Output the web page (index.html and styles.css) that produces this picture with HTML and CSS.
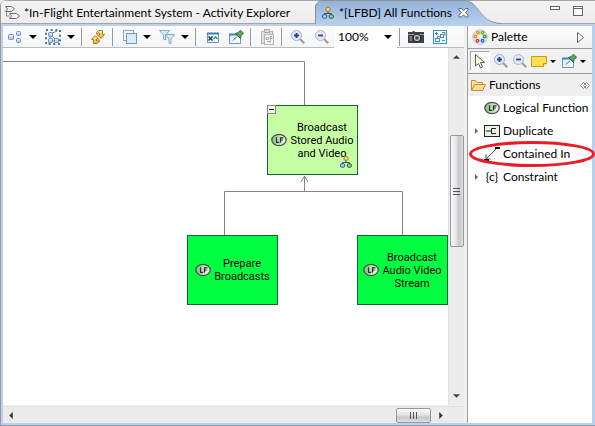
FILE: index.html
```html
<!DOCTYPE html>
<html lang="en">
<head>
<meta charset="utf-8">
<title>[LFBD] All Functions</title>
<link rel="stylesheet" href="styles.css">
</head>
<body>
<svg class="defs" aria-hidden="true">
  <defs>
    <linearGradient id="steel" x1="0" y1="0" x2="0" y2="1"><stop offset="0" stop-color="#eef4fc"/><stop offset="1" stop-color="#a9c3e4"/></linearGradient>
    <linearGradient id="gold" x1="0" y1="0" x2="0" y2="1"><stop offset="0" stop-color="#fff0a8"/><stop offset="1" stop-color="#eab030"/></linearGradient>
    <linearGradient id="tabfill" x1="0" y1="0" x2="0" y2="1"><stop offset="0" stop-color="#94b2d6"/><stop offset="1" stop-color="#b9d1ee"/></linearGradient>
    <linearGradient id="lfgrad" x1="0" y1="0" x2="1" y2="0"><stop offset="0" stop-color="#86bd7c"/><stop offset="1" stop-color="#f4faf0"/></linearGradient>
    <linearGradient id="pinbox" x1="0" y1="0" x2="1" y2="1"><stop offset="0" stop-color="#d4eafa"/><stop offset="1" stop-color="#ffffff"/></linearGradient>
    <symbol id="lf" viewBox="0 0 16 14"><ellipse cx="8" cy="7" rx="7.2" ry="5.6" fill="url(#lfgrad)" stroke="#4b524b" stroke-width="1.3"/><path d="M5.5 4.3v5h2.7M9.5 9.6V4.8h3M9.5 7h2.4" fill="none" stroke="#2c302c" stroke-width="1.2"/></symbol>
    <symbol id="tree" viewBox="0 0 12 12"><path d="M6 4v2.5M2.5 8V6.5h7V8" fill="none" stroke="#3c4a70" stroke-width="1"/><rect x="4.1" y=".6" width="3.8" height="3.6" rx=".8" fill="#ffe08a" stroke="#ad7618"/><rect x=".6" y="7.8" width="4" height="3.4" rx=".8" fill="#a9cdf8" stroke="#2d58a3"/><rect x="7.3" y="7.8" width="4" height="3.4" rx=".8" fill="#8fd08a" stroke="#31603f"/></symbol>
    <symbol id="zoomin" viewBox="0 0 16 16"><path d="M9.8 9.8l4.4 4.4" stroke="#b29c80" stroke-width="2.2"/><circle cx="6.5" cy="6.5" r="5" fill="#dfe9f8" stroke="#9fb0cd"/><path d="M6.500 4v5M4 6.500h5" stroke="#23409a" stroke-width="1.800"/></symbol>
    <symbol id="zoomout" viewBox="0 0 16 16"><path d="M9.8 9.8l4.4 4.4" stroke="#b29c80" stroke-width="2.2"/><circle cx="6.5" cy="6.5" r="5" fill="#e3eaf6" stroke="#a9b5c9"/><path d="M4 6.500h5" stroke="#344785" stroke-width="1.800"/></symbol>
    <symbol id="pin" viewBox="0 0 16 16"><rect x="1.5" y="5.5" width="11" height="9" fill="url(#pinbox)" stroke="#6b9bc0"/><path d="M1 5.500h8" stroke="#4384b4" stroke-width="2"/><path d="M5 11.500l4-4" stroke="#555"/><path d="M7.500 4.500l5 5 .5-2.800 2.500-2.500-3-3-2.500 2.500z" fill="#58a562" stroke="#2b6c3c"/></symbol>
    <symbol id="down" viewBox="0 0 8 4"><path d="M0 0h8L4 4z"/></symbol>
  </defs>
</svg>

<div class="window">
  <header class="tabs" role="tablist">
    <button class="tab tab-first" role="tab">
      <svg class="i16" viewBox="0 0 16 16"><path d="M1.500 1.500h6l3 2.500-3 2.500h-6l2-2.500zM5.500 8.500h7l3 2.500-3 2.500h-7l2-2.500z" fill="#f4f4f4" stroke="#6d6d6d"/><path d="M2.500 7.500V11h3" fill="none" stroke="#888"/></svg>
      <span>*In-Flight Entertainment System - Activity Explorer</span>
    </button>
    <div class="tab active">
      <svg class="tab-shape" viewBox="0 0 186 26" preserveAspectRatio="none"><path d="M0 26V6Q0 4 5 .5H148C166 .5 162 22.500 184 23.500V26z" fill="url(#tabfill)"/><path d="M.5 24V6Q1 4 5 .5H148C166 .5 162 22.500 186 23.500" fill="none" stroke="#8b929b"/></svg>
      <button class="tab-name" role="tab" aria-selected="true"><svg class="i12" viewBox="0 0 12 12"><use href="#tree"/></svg><span>*[LFBD] All Functions</span></button>
      <button class="close" aria-label="Close"><svg viewBox="0 0 11 11"><path d="M1 1.500h2.500l2 2.300 2-2.300H10v1.700L7.500 5.500 10 8v2H7.500l-2-2.300L3.500 10H1V8l2.500-2.500L1 3.200z" fill="#fff" stroke="#5e6670"/></svg></button>
    </div>
    <div class="winbtns">
      <button aria-label="Minimize"><svg viewBox="0 0 10 10"><rect x=".5" y=".5" width="9" height="3" fill="#fff" stroke="#666"/></svg></button>
      <button aria-label="Maximize"><svg viewBox="0 0 10 10"><rect x=".5" y=".5" width="9" height="9" fill="#fff" stroke="#666"/><path d="M0 2.500h10" stroke="#666"/></svg></button>
    </div>
  </header>

  <div class="body">
    <main class="editor">
      <div class="toolbar" role="toolbar">
        <button class="tool" aria-label="Arrange"><svg viewBox="0 0 16 16"><g fill="url(#steel)" stroke="#6b8fc0"><rect x="1.500" y="5.500" width="5" height="5" rx="1"/><rect x="9.500" y="2.500" width="4" height="4" rx="1"/><rect x="9.500" y="9.500" width="4" height="4" rx="1"/></g></svg></button>
        <button class="drop" aria-label="Arrange menu"><svg viewBox="0 0 8 4"><use href="#down"/></svg></button>
        <button class="tool" aria-label="Select"><svg viewBox="0 0 16 16"><rect x="1" y="1" width="14" height="14" fill="none" stroke="#4b74a6" stroke-width="2" stroke-dasharray="2 2.670"/><path d="M5 5v7h7M5 5l7 7M5 5l7-3" fill="none" stroke="#6780a4"/><g fill="url(#steel)" stroke="#5f83b3"><rect x="3.500" y="3.500" width="4" height="4" rx="1"/><rect x="3.500" y="9.500" width="4" height="4" rx="1"/><rect x="9.500" y="9.500" width="4" height="4" rx="1"/></g></svg></button>
        <button class="drop" aria-label="Select menu"><svg viewBox="0 0 8 4"><use href="#down"/></svg></button>
        <span class="sep"></span>
        <button class="tool" aria-label="Refresh"><svg viewBox="0 0 16 16"><g fill="url(#gold)" stroke="#b97a13"><path d="M6.500 3.500L9 1.500h3.500v4h2L11 9.500 7.500 6h2V4H8L7 5.500z"/><path d="M9.500 12.500L7 14.500H3.500v-4h-2L5 6.500 8.500 10h-2v2H8l1-1.500z"/></g></svg></button>
        <span class="sep"></span>
        <button class="tool" aria-label="Layers"><svg viewBox="0 0 16 16"><rect x="2.500" y="1.500" width="10" height="10" fill="#f7fbfc" stroke="#84abc4"/><rect x="5.500" y="4.500" width="10" height="10" fill="#dcebf8" stroke="#6c9bbb"/></svg></button>
        <button class="drop" aria-label="Layers menu"><svg viewBox="0 0 8 4"><use href="#down"/></svg></button>
        <button class="tool" aria-label="Filters"><svg viewBox="0 0 16 16"><g fill="#d4eaf6" stroke="#82aeca"><path d="M.5 1.500h10l-4 4.500v5l-2-1V6z"/><path d="M6.500 5.500h9L12 10v5l-2-1v-4z"/></g></svg></button>
        <button class="drop" aria-label="Filters menu"><svg viewBox="0 0 8 4"><use href="#down"/></svg></button>
        <span class="sep"></span>
        <button class="tool" aria-label="Hide element"><svg viewBox="0 0 16 16"><rect x="3.500" y="4.500" width="11" height="9" fill="#eef8fc" stroke="#7396b8"/><path d="M3 4.500h12" stroke="#3182b8" stroke-width="2"/><path d="M4.500 7.500l4 4m0-4l-4 4" stroke="#173f68" stroke-width="1.500"/><path d="M9.500 10l2-2 2 2" fill="none" stroke="#3f9b60" stroke-width="1.500"/></svg></button>
        <button class="tool" aria-label="Pin element"><svg viewBox="0 0 16 16"><use href="#pin"/></svg></button>
        <span class="sep"></span>
        <button class="tool" aria-label="Paste layout" disabled><svg viewBox="0 0 16 16"><rect x="2.500" y="2.500" width="11" height="12" fill="#e0e0e0" stroke="#b5b5b5"/><rect x="5.500" y=".5" width="5" height="3" fill="#ddd" stroke="#aaa"/><rect x="5.500" y="5.500" width="9" height="10" fill="#f6f6f6" stroke="#b5b5b5"/><path d="M7 8.500h2.500v2H7zM11 7.500h2v2h-2zM8 12.500h3v1.500M11.500 10v2.500" fill="none" stroke="#aaa"/></svg></button>
        <span class="sep"></span>
        <button class="tool" aria-label="Zoom in"><svg viewBox="0 0 16 16"><use href="#zoomin"/></svg></button>
        <button class="tool" aria-label="Zoom out"><svg viewBox="0 0 16 16"><use href="#zoomout"/></svg></button>
        <div class="combo"><select aria-label="Zoom level"><option>100%</option></select><svg class="combo-arrow" viewBox="0 0 8 4"><use href="#down"/></svg></div>
        <span class="sep sep-tight"></span>
        <button class="tool" aria-label="Export image"><svg viewBox="0 0 16 16"><path d="M1 3h3.500V2h2v1H16v11H0V3z" fill="#414141"/><path d="M0 5.500h16" stroke="#999"/><circle cx="9" cy="9" r="3.800" fill="#b9bfc6" stroke="#1d1d1d"/><circle cx="9" cy="9" r="1.800" fill="#36506a"/><rect x="1.500" y="7" width="2.500" height="5" fill="#777"/></svg></button>
        <button class="tool" aria-label="Layout mode"><svg viewBox="0 0 16 16"><g fill="#f1fafd" stroke="#3e91b0"><rect x="1.500" y="1.500" width="13" height="13"/><rect x="3.500" y="9.500" width="4" height="3"/><rect x="8.500" y="5.500" width="3" height="3"/><path d="M3 4.500h3M4.500 3v3M10 3.500h3v3M5.500 9V7.500h3M10 11.500h3"/></g></svg></button>
      </div>

      <div class="viewport">
        <div class="canvas">
          <svg class="links" width="445" height="356"><path d="M0 13.500h301.500V57M221.500 187v-43.500h178V187M301.500 143V128M298 134l3.500-6 3.500 6" fill="none" stroke="#858585"/></svg>
          <div class="node stored"><svg class="lf" viewBox="0 0 16 14"><use href="#lf"/></svg><span>Broadcast<br>Stored Audio<br>and Video</span>
            <button class="collapse" aria-label="Collapse"><svg viewBox="0 0 7 7"><path d="M1 3.500h5" stroke="#222"/></svg></button>
            <svg class="badge" viewBox="0 0 12 12"><use href="#tree"/></svg></div>
          <div class="node prepare"><svg class="lf" viewBox="0 0 16 14"><use href="#lf"/></svg><span>Prepare<br>Broadcasts</span></div>
          <div class="node stream"><svg class="lf" viewBox="0 0 16 14"><use href="#lf"/></svg><span>Broadcast<br>Audio Video<br>Stream</span></div>
        </div>
        <div class="vbar">
          <svg class="arr" viewBox="0 0 8 4"><path d="M0 4h8L4 0z" fill="#444"/></svg>
          <span class="vbefore"></span>
          <span class="vthumb"><i></i><i></i><i></i></span>
          <span class="vafter"></span>
          <svg class="arr" viewBox="0 0 8 4"><path d="M0 0h8L4 4z" fill="#444"/></svg>
        </div>
      </div>
      <div class="hbar">
        <svg class="arr-h" viewBox="0 0 4 8"><path d="M4 0v8L0 4z" fill="#333"/></svg>
        <span class="hbefore"></span>
        <span class="hthumb"><i></i><i></i><i></i></span>
        <svg class="arr-h" viewBox="0 0 4 8"><path d="M0 0v8l4-4z" fill="#333"/></svg>
      </div>
    </main>

    <aside class="palette">
      <div class="pal-head">
        <svg class="i16" viewBox="0 0 16 16"><circle cx="8" cy="8" r="7.300" fill="#e4eefb" stroke="#b2cbed"/><g fill="#fff" stroke-width="1.500"><circle cx="6" cy="3.700" r="1.300" stroke="#e29a1c"/><circle cx="10.500" cy="3.700" r="1.300" stroke="#7db51a"/><circle cx="12.700" cy="7.500" r="1.300" stroke="#34a136"/><circle cx="3.300" cy="7.500" r="1.300" stroke="#e88620"/><circle cx="5.500" cy="11.800" r="1.300" stroke="#e03c28"/><circle cx="10.500" cy="11.800" r="1.300" stroke="#3667cf"/></g></svg>
        <h2>Palette</h2>
        <button class="pal-toggle" aria-label="Hide palette"><svg viewBox="0 0 7 11"><path d="M.5.500v10l6-5z" fill="#fff" stroke="#666"/></svg></button>
      </div>
      <div class="pal-tools" role="toolbar">
        <button class="pick" aria-label="Select"><svg viewBox="0 0 16 16"><path d="M3.500 1.500v11.500l3-2.500 2 4.500 2-1-2-4.500h4z" fill="#fffbe8" stroke="#5f5b50"/></svg></button>
        <button class="ptool" aria-label="Zoom in"><svg viewBox="0 0 16 16"><use href="#zoomin"/></svg></button>
        <button class="ptool" aria-label="Zoom out"><svg viewBox="0 0 16 16"><use href="#zoomout"/></svg></button>
        <button class="ptool" aria-label="Note"><svg viewBox="0 0 16 16"><path d="M.5 3.500h15v7l-3 3H.5z" fill="#ffdf54" stroke="#c79a1c"/><path d="M15.500 10.500h-3v3" fill="#fff4b8" stroke="#c79a1c"/></svg></button>
        <button class="pdrop" aria-label="Note menu"><svg viewBox="0 0 8 4"><use href="#down"/></svg></button>
        <button class="ptool" aria-label="Pin"><svg viewBox="0 0 16 16"><use href="#pin"/></svg></button>
        <button class="pdrop" aria-label="Pin menu"><svg viewBox="0 0 8 4"><use href="#down"/></svg></button>
      </div>
      <button class="drawer">
        <svg class="i16" viewBox="0 0 16 16"><path d="M1.500 13V3.500h4l1.500 2h5.500V8" fill="#fbe3a5" stroke="#c48b35"/><path d="M1.500 13.500l3-6h11l-3 6z" fill="#ffdc8c" stroke="#c48b35"/></svg>
        <span>Functions</span>
        <svg class="pushpin" viewBox="0 0 10 7"><path d="M3.500 .5l-3 3 3 3 1.500-1.500 1.500 1.500 3-3-3-3L5 2zM5 2L3.500 3.500 5 5l1.500-1.500z" fill="#fff" stroke="#888"/></svg>
      </button>
      <ul class="entries">
        <li><button><span class="exp"></span><svg class="i16" viewBox="0 0 16 14"><use href="#lf"/></svg><span>Logical Function</span></button></li>
        <li><button><span class="exp"><svg viewBox="0 0 4 6"><path d="M0 0v6l3-3z" fill="#666"/></svg></span><svg class="i16" viewBox="0 0 16 16"><rect x=".5" y="2.500" width="15" height="11" fill="#e3f4df" stroke="#222"/><path d="M2 8h5M12 5.500H7.500v5H12" fill="none" stroke="#222"/></svg><span>Duplicate</span></button></li>
        <li class="marked"><button><span class="exp"></span><svg class="i16" viewBox="0 0 16 16"><path d="M2 13L12.500 2.500M2 8.500V13h4.500" fill="none" stroke="#555"/><path d="M11 2h5M0 14h5" stroke="#111" stroke-width="2"/></svg><span>Contained In</span></button>
          <svg class="ring" viewBox="0 0 126 26"><ellipse cx="63" cy="13" rx="61.500" ry="11.500" fill="none" stroke="#ec1c24" stroke-width="3"/></svg></li>
        <li><button><span class="exp"><svg viewBox="0 0 4 6"><path d="M0 0v6l3-3z" fill="#666"/></svg></span><span class="glyph">{c}</span><span>Constraint</span></button></li>
      </ul>
    </aside>
  </div>
</div>
</body>
</html>
```

FILE: styles.css
```css
* { box-sizing: border-box; }
body { margin: 0; font: 12px/16px Lato, "Open Sans", sans-serif; color: #000; background: #f0f0f0; }
button { padding: 0; border: 0; background: none; font: inherit; color: inherit; text-align: left; }
svg { display: block; flex: none; }
.defs { position: absolute; width: 0; height: 0; }
.i16 { width: 16px; height: 16px; }
.i12 { width: 12px; height: 12px; }

.window { display: flex; flex-direction: column; height: 100vh; border-left: 1px solid #999; border-bottom: 1px solid #8f9aa8; border-top-left-radius: 6px; overflow: hidden; }

.tabs { display: flex; flex: none; height: 26px; border-top: 1px solid #a5a5a5; border-bottom: 2px solid #b9d1ee; background: linear-gradient(#f3f3f3, #ededed); box-shadow: inset 0 -1px #a5a5a5; }
.tab { display: flex; align-items: center; white-space: nowrap; }
.tab-first { width: 314px; gap: 4px; padding-left: 3px; flex: none; }
.active { position: relative; width: 186px; height: 25px; flex: none; margin-top: -1px; }
.tab-shape { position: absolute; inset: 0; width: 100%; height: 26px; }
.tab-name { position: relative; display: flex; align-items: center; gap: 5px; width: 136px; margin-left: 7px; }
.close { position: relative; }
.close svg { width: 11px; height: 11px; }
.winbtns { display: flex; gap: 13px; margin-left: auto; padding: 5px 12px 0 0; align-items: flex-start; }
.winbtns svg { width: 10px; height: 10px; }

.body { display: flex; flex: 1; min-height: 0; border: solid #b9d1ee; border-width: 0 3px 2px 2px; }
.editor { display: flex; flex-direction: column; flex: 1; min-width: 0; background: #f0f0f0; padding-right: 3px; }

.toolbar { display: flex; align-items: center; flex: none; height: 22px; background: linear-gradient(#fcfcfc, #f4f5f7); border-bottom: 1px solid #bbb; }
.tool { margin-left: 8px; flex: none; }
.tool:first-child { margin-left: 4px; }
.tool svg { width: 16px; height: 16px; }
.drop { margin-left: 6px; flex: none; }
.drop svg, .combo-arrow { width: 8px; height: 4px; }
.sep { flex: none; width: 1px; height: 18px; margin-left: 6px; background: #999; }
.sep-tight { margin-left: 2px; }
.combo { position: relative; width: 63px; height: 22px; margin-left: 4px; flex: none; }
.combo select { width: 100%; height: 100%; padding: 0 4px; border: 0; appearance: none; background: #fff; font: inherit; color: inherit; }
.combo-arrow { position: absolute; right: 5px; top: 9px; pointer-events: none; }

.viewport { display: flex; flex: 1; min-height: 0; }
.canvas { position: relative; flex: 1; overflow: hidden; background: #fff; }
.links { position: absolute; left: 0; top: 0; }
.node { position: absolute; display: flex; align-items: center; justify-content: center; gap: 3px; width: 91px; height: 70px; border: 1px solid #17642e; background: #00ff40; font: 11px/13px Roboto, "Liberation Sans", sans-serif; text-align: center; white-space: nowrap; }
.lf { width: 16px; height: 14px; }
.stored { left: 264px; top: 57px; background: #c6ffa3; }
.prepare { left: 184px; top: 187px; }
.stream { left: 354px; top: 187px; }
.collapse { position: absolute; left: -1px; top: -1px; border: 1px solid #888; background: #f4f4f4; }
.collapse svg { width: 7px; height: 7px; }
.badge { position: absolute; right: 5px; bottom: 6px; width: 12px; height: 12px; }

.vbar { display: flex; flex-direction: column; align-items: center; flex: none; width: 16px; padding: 7px 0; background: #ececec; border-left: 1px solid #e2e2e2; }
.arr { width: 7px; height: 4px; }
.vbefore { flex: 77; }
.vafter { flex: 148; }
.vthumb { display: flex; flex-direction: column; align-items: center; justify-content: center; gap: 2px; flex: 111; width: 14px; border: 1px solid #989898; border-radius: 2px; background: linear-gradient(90deg, #fafafa, #e4e4e6 45%, #c6c7cb 65%, #dedfe2); }
.vthumb i { width: 7px; height: 1px; background: #555; }
.hbar { display: flex; align-items: center; flex: none; height: 17px; margin-top: 1px; padding: 0 21px 0 6px; background: #ececec; border-top: 1px solid #e2e2e2; }
.arr-h { width: 4px; height: 7px; }
.hbefore { flex: 1; }
.hthumb { display: flex; align-items: center; justify-content: center; gap: 2px; width: 35px; height: 15px; margin-right: 8px; border: 1px solid #989898; border-radius: 2px; background: linear-gradient(#fafafa, #e4e4e6 45%, #c6c7cb 65%, #dedfe2); }
.hthumb i { width: 1px; height: 7px; background: #555; }

.palette { flex: none; width: 125px; border-left: 1px solid #a0a0a0; background: #fff; white-space: nowrap; }
.pal-head { display: flex; align-items: center; gap: 3px; height: 23px; padding: 0 8px 0 4px; border-bottom: 1px solid #999; background: linear-gradient(#fdfdfd, #f0f0f0); }
.pal-head h2 { margin: 0; flex: 1; font: inherit; }
.pal-toggle svg { width: 7px; height: 11px; }
.pal-tools { display: flex; align-items: center; height: 25px; padding-left: 2px; border-bottom: 1px solid #999; background: #f1f1f1; }
.pick { padding: 1px; border: 1px solid #aaa; border-right-color: #fff; border-bottom-color: #fff; background: #f8f8f8; }
.pick svg, .ptool svg { width: 16px; height: 16px; }
.ptool { margin-left: 3px; }
.pdrop { margin-left: 3px; margin-right: 2px; }
.pdrop svg { width: 6px; height: 3px; }
.drawer { display: flex; align-items: center; gap: 3px; width: 100%; height: 22px; padding: 0 2px 0 2px; background: #efefef; }
.drawer span { flex: 1; }
.pushpin { width: 10px; height: 7px; }
.entries { margin: 0; padding: 0; list-style: none; }
.entries li { position: relative; height: 23px; }
.entries button { display: flex; align-items: center; gap: 3px; height: 23px; }
.exp { width: 13px; padding-left: 7px; }
.exp svg { width: 4px; height: 6px; }
.glyph { width: 16px; text-align: center; }
.ring { position: absolute; right: -3px; top: -1px; width: 126px; height: 26px; pointer-events: none; }
```
